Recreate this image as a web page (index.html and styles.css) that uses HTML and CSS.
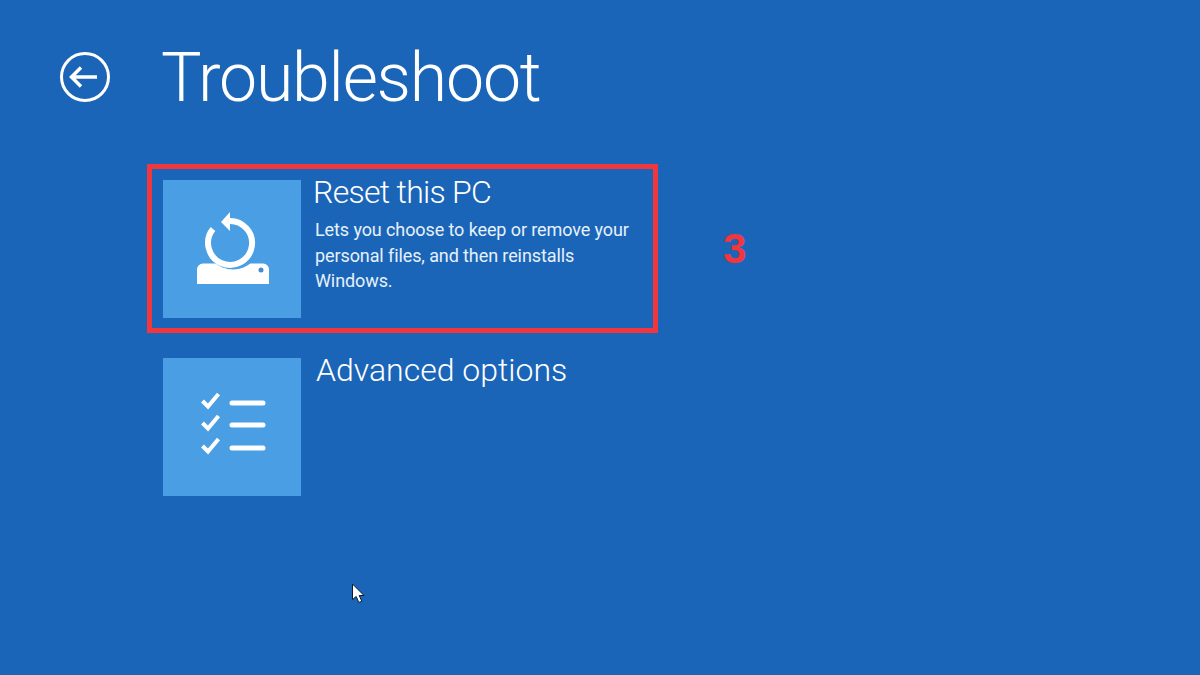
FILE: index.html
```html
<!DOCTYPE html>
<html lang="en">
<head>
    <meta charset="UTF-8">
    <title>Troubleshoot</title>
    <link rel="stylesheet" href="styles.css">
</head>
<body>
    <header class="header">
        <svg class="back-icon" width="52" height="52" viewBox="0 0 52 52">
            <circle cx="26" cy="26" r="23.500" fill="none" stroke="#fff" stroke-width="3"/>
            <path d="M38 26H13M22 16.500L12.500 26L22 35.500" fill="none" stroke="#fff" stroke-width="3.500"/>
        </svg>
        <h1 class="title">Troubleshoot</h1>
    </header>

    <main class="options">
        <div class="selected-row">
            <div class="option option-selected">
                <div class="tile">
                    <svg width="138" height="138" viewBox="0 0 138 138">
                        <path d="M34 104V90a6 6 0 0 1 6-6.500H100a6 6 0 0 1 6 6.500V104Z" fill="#fff"/>
                        <circle cx="70" cy="62" r="27.500" fill="#4a9fe4"/>
                        <path d="M50 49A22 22 0 1 0 65 41" fill="none" stroke="#fff" stroke-width="6"/>
                        <path d="M58 42L67 32V51Z" fill="#fff"/>
                        <circle cx="98" cy="90" r="2.500" fill="#4a8ccb"/>
                    </svg>
                </div>
                <div class="option-text">
                    <h2 class="option-title option-title-tight">Reset this PC</h2>
                    <p class="option-desc">Lets you choose to keep or remove your personal files, and then reinstalls Windows.</p>
                </div>
            </div>
            <div class="step-number">3</div>
        </div>

        <div class="option">
            <div class="tile">
                <svg width="138" height="138" viewBox="0 0 138 138">
                    <path d="M39.500 43L45 48.500L55.500 36M39.500 65L45 70.500L55.500 58M39.500 88L45 93.500L55.500 81" fill="none" stroke="#fff" stroke-width="4"/>
                    <path d="M69 45H100M69 67H100M69 90H100" fill="none" stroke="#fff" stroke-width="5" stroke-linecap="round"/>
                </svg>
            </div>
            <div class="option-text">
                <h2 class="option-title option-title-plain">Advanced options</h2>
            </div>
        </div>
    </main>

    <svg class="cursor" width="15" height="21" viewBox="0 0 15 21">
        <path d="M1.500 1V16.500L5.200 13.500L7.800 19.500L10.800 18.200L8.200 12.500H13Z" fill="#fff" stroke="#0b1b33" stroke-width="1"/>
    </svg>
</body>
</html>
```

FILE: styles.css
```css
html, body {
    margin: 0;
    height: 100%;
}
body {
    position: relative;
    overflow: hidden;
    background: #1b65b8;
    color: white;
    font-family: Roboto, "Open Sans", sans-serif;
}
.header {
    display: flex;
    align-items: center;
    height: 154px;
    padding-left: 59px;
}
.back-icon {
    flex: none;
}
.title {
    margin: 2px 0 0 50px;
    font-size: 68px;
    font-weight: 300;
    line-height: 1;
    letter-spacing: -1.200px;
}
.options {
    display: flex;
    flex-direction: column;
    gap: 25px;
    padding: 10px 0 0 147px;
}
.selected-row {
    display: flex;
    align-items: center;
}
.option {
    display: flex;
    width: 511px;
    box-sizing: border-box;
    padding: 0 16px;
}
.option-selected {
    height: 169px;
    padding: 11px;
    border: 5px solid #f1363e;
}
.tile {
    flex: none;
    width: 138px;
    height: 138px;
    background: #4a9fe4;
}
.tile svg {
    display: block;
}
.option-text {
    margin-left: 12px;
    min-width: 0;
}
.option-title {
    margin: -6px 0 0;
    font-size: 32px;
    font-weight: 300;
    line-height: 36px;
}
.option-title-tight {
    letter-spacing: -0.700px;
}
.option-title-plain {
    margin: -6px 0 0 3px;
}
.option-desc {
    margin: 7px 0 0 2px;
    font-size: 18px;
    line-height: 25.500px;
    letter-spacing: -0.100px;
    color: #e6f1fb;
}
.step-number {
    margin-left: 65px;
    font-family: "Liberation Sans", Arial, sans-serif;
    font-size: 42px;
    font-weight: 700;
    color: #f1363e;
}
.cursor {
    position: absolute;
    left: 351px;
    top: 583px;
}
```
